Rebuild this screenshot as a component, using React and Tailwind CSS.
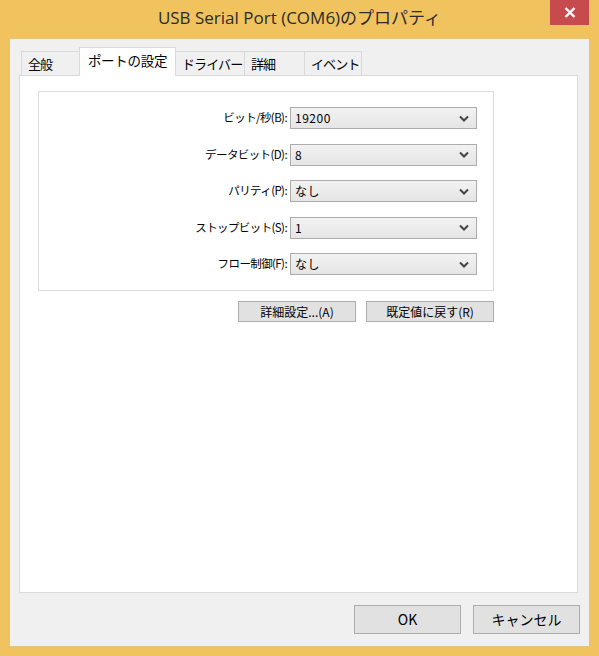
import React from 'react'

const ui = { fontFamily: '"Noto Sans CJK JP", "Noto Sans", sans-serif' }
const title = { fontFamily: '"Open Sans", "Noto Sans CJK JP", sans-serif' }

const tabs = [
  { label: '全般', w: 'w-[58px]' },
  { label: 'ポートの設定', w: 'w-[97px]', active: true },
  { label: 'ドライバー', w: 'w-[69px]' },
  { label: '詳細', w: 'w-[60px]' },
  { label: 'イベント', w: 'w-[57px]' },
]

const fields = [
  { label: 'ビット/秒(B):', value: '19200' },
  { label: 'データビット(D):', value: '8' },
  { label: 'パリティ(P):', value: 'なし' },
  { label: 'ストップビット(S):', value: '1' },
  { label: 'フロー制御(F):', value: 'なし' },
]

function Chevron() {
  return (
    <svg width="10" height="7" viewBox="0 0 10 7" className="text-[#444]">
      <path d="M1 1.5 L5 5.5 L9 1.5" fill="none" stroke="currentColor" strokeWidth="2" />
    </svg>
  )
}

function Combo({ value }) {
  return (
    <div className="w-[187px] h-[22px] border border-[#acacac] bg-gradient-to-b from-[#f2f2f2] to-[#e5e5e5] flex items-center justify-between pl-[4px] pr-[7px]">
      <span className="text-[12px] text-black tracking-[0.5px]">{value}</span>
      <Chevron />
    </div>
  )
}

function Button({ children, className = '' }) {
  return (
    <div className={`flex items-center justify-center bg-[#e1e1e1] border border-[#adadad] text-black ${className}`}>
      {children}
    </div>
  )
}

export default function App() {
  return (
    <div className="w-[599px] h-[656px] bg-[#f0c35f] flex flex-col px-[9px] pb-[9px] relative" style={ui}>
      {/* title bar */}
      <div className="h-[38px] flex items-center justify-center pb-[2px]">
        <span className="text-[17px] text-[#2b2b2b]" style={title}>USB Serial Port (COM6)のプロパティ</span>
      </div>
      <div className="absolute top-0 right-[10px] w-[39px] h-[25px] bg-[#c74a4d] flex items-center justify-center">
        <svg width="12" height="11" viewBox="0 0 12 11">
          <path d="M1.5 1 L10.5 10 M10.5 1 L1.5 10" stroke="#fff" strokeWidth="2.4" />
        </svg>
      </div>

      {/* client */}
      <div className="flex-1 bg-[#f0f0f0] border border-[#e6c37a] flex flex-col pt-[9px] pl-[9px] pr-[11px]">
        {/* tabs */}
        <div className="flex items-end h-[28px] pl-[2px] relative z-10">
          {tabs.map((t, i) =>
            t.active ? (
              <div key={t.label} className={`${t.w} shrink-0 h-[29px] bg-white border border-b-0 border-[#d9d9d9] flex items-center justify-center whitespace-nowrap text-[13.5px] tracking-[-0.3px] text-black pb-[3px]`}>
                {t.label}
              </div>
            ) : (
              <div key={t.label} className={`${t.w} shrink-0 h-[25px] bg-[#f0f0f0] border border-[#d9d9d9] ${i === 0 ? 'border-r-0' : 'border-l-0'} flex items-center pl-[6px] whitespace-nowrap text-[13px] tracking-[-0.9px] text-black`}>
                {t.label}
              </div>
            )
          )}
        </div>

        {/* tab panel */}
        <div className="h-[518px] bg-white border border-[#d9d9d9] -mt-px pt-[15px] pl-[18px]">
          <div className="w-[456px] h-[200px] border border-[#dcdcdc] pt-[15px] pr-[16px] flex flex-col items-end gap-[14.5px]">
            {fields.map((f) => (
              <div key={f.label} className="flex items-center h-[22px] gap-[3px]">
                <span className="text-[11.5px] tracking-[-0.6px] text-black">{f.label}</span>
                <Combo value={f.value} />
              </div>
            ))}
          </div>
          <div className="flex gap-[10px] mt-[10px] ml-[200px]">
            <Button className="w-[118px] h-[21px] text-[12px]">詳細設定...(A)</Button>
            <Button className="w-[128px] h-[21px] text-[12px]">既定値に戻す(R)</Button>
          </div>
        </div>

        {/* footer */}
        <div className="flex-1 flex justify-end items-start pt-[12px] gap-[12px] -mr-[2px]">
          <Button className="w-[107px] h-[29px] text-[14px] border-[#3c8fe0]">OK</Button>
          <Button className="w-[107px] h-[29px] text-[14px]">キャンセル</Button>
        </div>
      </div>
    </div>
  )
}
